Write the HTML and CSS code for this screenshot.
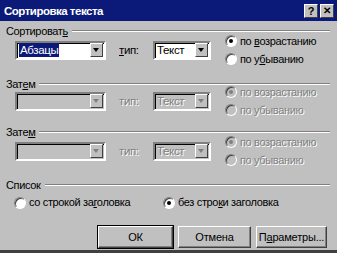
FILE: index.html
```html
<!DOCTYPE html>
<html lang="ru">
<head>
    <meta charset="UTF-8">
    <title>Сортировка текста</title>
    <link rel="stylesheet" href="styles.css">
</head>
<body>
    <div class="dialog">
        <div class="titlebar">
            <span class="title">Сортировка текста</span>
            <span class="tbtn">?</span>
            <span class="tbtn close">✕</span>
        </div>

        <div class="content">
            <div class="group first">
                <div class="group-head"><span>Сортироват<u>ь</u></span><i></i></div>
                <div class="sort-row">
                    <div class="combo wide"><span class="sel">Абзацы</span><b class="arrow"></b></div>
                    <span class="type-label"><u>т</u>ип:</span>
                    <div class="combo narrow"><span>Текст</span><b class="arrow"></b></div>
                    <div class="radios">
                        <label class="radio"><span class="dot on"></span><span>по <u>в</u>озрастанию</span></label>
                        <label class="radio"><span class="dot"></span><span>по у<u>б</u>ыванию</span></label>
                    </div>
                </div>
            </div>

            <div class="group off second">
                <div class="group-head"><span>Зат<u>е</u>м</span><i></i></div>
                <div class="sort-row">
                    <div class="combo wide"><span></span><b class="arrow"></b></div>
                    <span class="type-label">тип:</span>
                    <div class="combo narrow"><span>Текст</span><b class="arrow"></b></div>
                    <div class="radios">
                        <label class="radio"><span class="dot on"></span><span>по возрастанию</span></label>
                        <label class="radio"><span class="dot"></span><span>по убыванию</span></label>
                    </div>
                </div>
            </div>

            <div class="group off third">
                <div class="group-head"><span>Зате<u>м</u></span><i></i></div>
                <div class="sort-row">
                    <div class="combo wide"><span></span><b class="arrow"></b></div>
                    <span class="type-label">тип:</span>
                    <div class="combo narrow"><span>Текст</span><b class="arrow"></b></div>
                    <div class="radios">
                        <label class="radio"><span class="dot on"></span><span>по возрастанию</span></label>
                        <label class="radio"><span class="dot"></span><span>по убыванию</span></label>
                    </div>
                </div>
            </div>

            <div class="group list">
                <div class="group-head"><span>Список</span><i></i></div>
                <div class="list-row">
                    <label class="radio"><span class="dot"></span><span>со строкой за<u>г</u>оловка</span></label>
                    <label class="radio"><span class="dot on"></span><span>без стро<u>к</u>и заголовка</span></label>
                </div>
            </div>

            <div class="buttons">
                <button class="btn default">ОК</button>
                <button class="btn">Отмена</button>
                <button class="btn">П<u>а</u>раметры...</button>
            </div>
        </div>
    </div>
</body>
</html>
```

FILE: styles.css
```css
body {
    margin: 0;
    font-family: "Liberation Sans", Arial, sans-serif;
    font-size: 11px;
    letter-spacing: -0.35px;
    color: #000;
    background: #c0c0c0;
}
.dialog {
    width: 337px;
    height: 253px;
    background: #c0c0c0;
    box-sizing: border-box;
    border-bottom: 3px solid #404040;
    overflow: hidden;
}
.titlebar {
    height: 21px;
    background: #0b1a78;
    display: flex;
    align-items: center;
    padding: 0 3px 0 4px;
    gap: 2px;
}
.title {
    flex: 1;
    color: #fff;
    font-weight: bold;
    font-size: 11.5px;
    letter-spacing: -0.5px;
}
.tbtn {
    width: 14px;
    height: 14px;
    box-sizing: border-box;
    background: #c0c0c0;
    border: 1px solid;
    border-color: #fff #404040 #404040 #fff;
    font-weight: bold;
    font-size: 11px;
    line-height: 12px;
    letter-spacing: 0;
    text-align: center;
}
.tbtn.close {
    font-size: 10px;
}
.content {
    padding: 3px 7px 0 6px;
}
.group-head {
    display: flex;
    align-items: center;
    height: 14px;
}
.group-head i {
    flex: 1;
    margin-left: 4px;
    border-top: 1px solid #808080;
    border-bottom: 1px solid #fff;
}
.sort-row {
    display: flex;
    align-items: center;
    padding-left: 9px;
    height: 24px;
}
.second {
    margin-top: 15px;
}
.second .sort-row {
    height: 20px;
}
.third {
    margin-top: 14px;
}
.combo {
    height: 19px;
    box-sizing: border-box;
    border: 2px solid;
    border-color: #808080 #fff #fff #808080;
    box-shadow: inset 1px 1px 0 #000;
    background: #fff;
    display: flex;
    align-items: center;
    padding: 1px 1px 1px 2px;
    font-size: 11.5px;
}
.combo span {
    flex: 1;
    line-height: 14px;
}
.combo .sel {
    flex: none;
    background: #0b1a78;
    color: #fff;
    padding: 0 1px;
    margin-right: auto;
}
.wide {
    width: 91px;
}
.narrow {
    width: 58px;
    margin-left: 4px;
}
.arrow {
    width: 13px;
    height: 14px;
    box-sizing: border-box;
    background: #c0c0c0;
    border: 1px solid;
    border-color: #fff #404040 #404040 #fff;
    position: relative;
}
.arrow::after {
    content: "";
    position: absolute;
    left: 2px;
    top: 4px;
    border-left: 3.5px solid transparent;
    border-right: 3.5px solid transparent;
    border-top: 4px solid #000;
}
.type-label {
    margin-left: 13px;
    width: 30px;
    font-size: 11.5px;
}
.radios {
    margin-left: 14px;
    display: flex;
    flex-direction: column;
    gap: 5px;
}
.radio {
    display: flex;
    align-items: center;
    gap: 3px;
    line-height: 13px;
    white-space: nowrap;
}
.dot {
    width: 12px;
    height: 12px;
    box-sizing: border-box;
    border-radius: 50%;
    border: 1px solid;
    border-color: #808080 #fff #fff #808080;
    box-shadow: inset 1px 1px 0 #404040;
    background: #fff;
    display: flex;
    align-items: center;
    justify-content: center;
}
.dot.on::after {
    content: "";
    width: 4px;
    height: 4px;
    border-radius: 50%;
    background: #000;
}
.off .combo {
    background: #c0c0c0;
}
.off .combo span,
.off .type-label,
.off .radio {
    color: #808080;
    text-shadow: 1px 1px 0 #fff;
}
.off .arrow::after {
    border-top-color: #808080;
}
.off .dot {
    background: #c0c0c0;
}
.off .dot.on::after {
    background: #808080;
}
.group.list {
    margin-top: 15px;
}
.list-row {
    display: flex;
    padding: 4px 0 0 8px;
}
.list-row .radio:first-child {
    width: 149px;
}
.buttons {
    display: flex;
    justify-content: flex-end;
    gap: 5px;
    margin-top: 17px;
    padding-right: 3px;
}
.btn {
    height: 22px;
    font-family: inherit;
    font-size: 11px;
    letter-spacing: -0.2px;
    background: #c0c0c0;
    border: 1px solid;
    border-color: #fff #404040 #404040 #fff;
    box-shadow: inset -1px -1px 0 #808080;
    padding: 0;
    color: #000;
}
.btn:nth-child(1) {
    width: 75px;
}
.btn:nth-child(2) {
    width: 73px;
}
.btn:nth-child(3) {
    width: 71px;
}
.btn.default {
    outline: 1px solid #000;
}
```
